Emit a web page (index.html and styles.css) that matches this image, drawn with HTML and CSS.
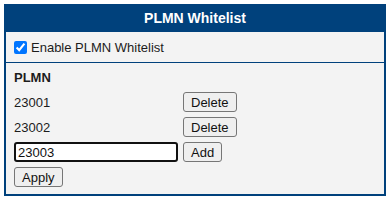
FILE: index.html
```html
<!DOCTYPE html>
<html lang="en">
<head>
    <meta charset="UTF-8">
    <meta name="viewport" content="width=device-width, initial-scale=1.0">
    <title>PLMN Whitelist</title>
    <link rel="stylesheet" href="styles.css">
</head>
<body>
    <div class="panel">
        <div class="panel-title">PLMN Whitelist</div>
        <div class="enable-row">
            <label><input type="checkbox" checked> Enable PLMN Whitelist</label>
        </div>
        <div class="panel-body">
            <div class="row head">PLMN</div>
            <div class="row">
                <span class="plmn">23001</span>
                <button>Delete</button>
            </div>
            <div class="row">
                <span class="plmn">23002</span>
                <button>Delete</button>
            </div>
            <div class="row">
                <input type="text" class="plmn-input" value="23003">
                <button>Add</button>
            </div>
            <div class="row">
                <button>Apply</button>
            </div>
        </div>
    </div>
</body>
</html>
```

FILE: styles.css
```css
body {
    margin: 4px;
    font-family: "Liberation Sans", Arial, sans-serif;
    font-size: 13px;
    color: #1c1c1c;
    background: #fff;
}
.panel {
    width: 382px;
    height: 192px;
    box-sizing: border-box;
    border: 2px solid #00417c;
    border-top: 0;
    background-color: #f3f3f3;
}
.panel-title {
    height: 28px;
    line-height: 28px;
    margin: 0 -2px;
    background-color: #00417c;
    color: #fff;
    font-size: 14px;
    font-weight: bold;
    text-align: center;
}
.enable-row {
    height: 30px;
    display: flex;
    align-items: center;
    padding-left: 8px;
    border-bottom: 1px solid #00417c;
}
.enable-row label {
    display: flex;
    align-items: center;
}
.enable-row input {
    width: 13px;
    height: 13px;
    margin: 0 4px 0 0;
    accent-color: #0075ff;
}
.panel-body {
    padding: 4px 8px 0 8px;
}
.row {
    display: flex;
    align-items: center;
    height: 20px;
    margin-bottom: 5px;
}
.head {
    font-weight: bold;
}
.plmn {
    width: 169px;
}
button {
    font-family: "Liberation Sans", Arial, sans-serif;
    font-size: 13px;
    color: #111;
    height: 20px;
    padding: 0 7px;
    background-color: #efefef;
    border: 1px solid #767676;
    border-radius: 3px;
}
.plmn-input {
    width: 164px;
    height: 20px;
    box-sizing: border-box;
    margin: 0 5px 0 0;
    padding: 0 2px;
    font-family: "Liberation Sans", Arial, sans-serif;
    font-size: 13px;
    color: #111;
    background: #fff;
    border: 2px solid #111;
    border-radius: 3px;
}
```
